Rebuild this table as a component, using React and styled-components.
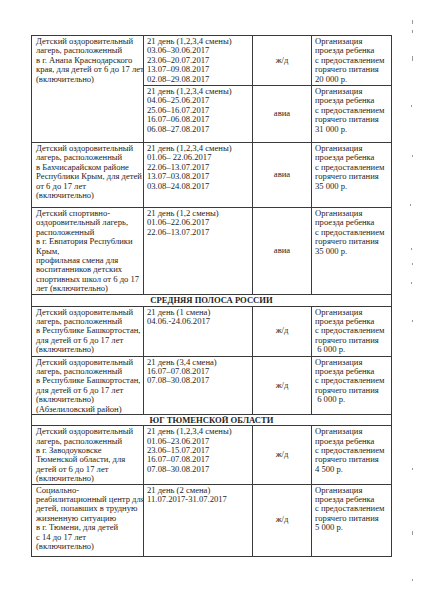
import styled, { createGlobalStyle } from "styled-components";

const GlobalStyle = createGlobalStyle`
  html, body {
    margin: 0;
    padding: 0;
    background: #ffffff;
  }
  body {
    font-family: "Liberation Serif", "Times New Roman", serif;
    color: #1c1c1c;
  }
`;

const camps = [
  {
    name: [
      "Детский оздоровительный",
      "лагерь, расположенный",
      "в г. Анапа Краснодарского",
      "края, для детей от 6 до 17 лет",
      "(включительно)",
    ],
    trips: [
      {
        h: 50,
        dates: [
          "21 день (1,2,3,4 смены)",
          "03.06–30.06.2017",
          "23.06–20.07.2017",
          "13.07–09.08.2017",
          "02.08–29.08.2017",
        ],
        transport: "ж/д",
        price: "20 000 р.",
      },
      {
        h: 57,
        dates: [
          "21 день (1,2,3,4 смены)",
          "04.06–25.06.2017",
          "25.06–16.07.2017",
          "16.07–06.08.2017",
          "06.08–27.08.2017",
        ],
        transport: "авиа",
        price: "31 000 р.",
      },
    ],
  },
  {
    name: [
      "Детский оздоровительный",
      "лагерь, расположенный",
      "в Бахчисарайском районе",
      "Республики Крым, для детей",
      "от 6 до 17 лет",
      "(включительно)",
    ],
    trips: [
      {
        h: 65,
        dates: [
          "21 день (1,2,3,4 смены)",
          "01.06– 22.06.2017",
          "22.06–13.07.2017",
          "13.07–03.08.2017",
          "03.08–24.08.2017",
        ],
        transport: "авиа",
        price: "35 000 р.",
      },
    ],
  },
  {
    name: [
      "Детский спортивно-",
      "оздоровительный лагерь,",
      "расположенный",
      "в г. Евпатория Республики",
      "Крым,",
      "профильная смена для",
      "воспитанников детских",
      "спортивных школ от 6 до 17",
      "лет (включительно)",
    ],
    trips: [
      {
        h: 86,
        dates: ["21 день (1,2 смены)", "01.06–22.06.2017", "22.06–13.07.2017"],
        transport: "авиа",
        price: "35 000 р.",
      },
    ],
  },
  { section: "СРЕДНЯЯ ПОЛОСА РОССИИ", h: 12 },
  {
    name: [
      "Детский оздоровительный",
      "лагерь, расположенный",
      "в Республике Башкортостан,",
      "для детей от 6 до 17 лет",
      "(включительно)",
    ],
    trips: [
      {
        h: 50,
        dates: ["21 день (1 смена)", "04.06.-24.06.2017"],
        transport: "ж/д",
        price: "\u00a06 000 р.",
      },
    ],
  },
  {
    name: [
      "Детский оздоровительный",
      "лагерь, расположенный",
      "в Республике Башкортостан,",
      "для детей от 6 до 17 лет",
      "(включительно)",
      "(Абзелиловский район)",
    ],
    trips: [
      {
        h: 58,
        dates: ["21 день (3,4 смена)", "16.07–07.08.2017", "07.08–30.08.2017"],
        transport: "ж/д",
        price: "\u00a06 000 р.",
      },
    ],
  },
  { section: "ЮГ ТЮМЕНСКОЙ ОБЛАСТИ", h: 11 },
  {
    name: [
      "Детский оздоровительный",
      "лагерь, расположенный",
      "в г. Заводоуковске",
      "Тюменской области, для",
      "детей от 6 до 17 лет",
      "(включительно)",
    ],
    trips: [
      {
        h: 57,
        dates: [
          "21 день (1,2,3,4 смены)",
          "01.06–23.06.2017",
          "23.06–15.07.2017",
          "16.07–07.08.2017",
          "07.08–30.08.2017",
        ],
        transport: "ж/д",
        price: "4 500 р.",
      },
    ],
  },
  {
    name: [
      "Социально-",
      "реабилитационный центр для",
      "детей, попавших в трудную",
      "жизненную ситуацию",
      "в г. Тюмени, для детей",
      "с 14 до 17 лет",
      "(включительно)",
    ],
    trips: [
      {
        h: 72,
        dates: ["21 день (2 смена)", "11.07.2017-31.07.2017"],
        transport: "ж/д",
        price: "5 000 р.",
      },
    ],
  },
];

const priceLines = (price) => [
  "Организация",
  "проезда ребенка",
  "с предоставлением",
  "горячего питания",
  price,
];

const specks = [
  [412, 20, 4],
  [412, 30, 3],
  [412, 56, 5],
  [411, 105, 2],
  [412, 155, 2],
  [410, 204, 2],
  [411, 248, 2],
  [412, 263, 2],
  [411, 282, 2],
  [412, 320, 2],
  [412, 468, 2],
  [412, 531, 4],
  [412, 579, 2],
];

function Lines({ lines }) {
  return lines.map((line, i) => <Line key={i}>{line}</Line>);
}

export default function App() {
  return (
    <Page>
      <GlobalStyle />
      <Sheet>
        <colgroup>
          <col style={{ width: 112 }} />
          <col style={{ width: 109 }} />
          <col style={{ width: 59 }} />
          <col style={{ width: 80 }} />
        </colgroup>
        <tbody>
          {camps.map((camp, ci) =>
            camp.section ? (
              <Row key={ci} $h={camp.h}>
                <SectionCell colSpan={4}>{camp.section}</SectionCell>
              </Row>
            ) : (
              camp.trips.map((trip, ti) => (
                <Row key={`${ci}-${ti}`} $h={trip.h}>
                  {ti === 0 && (
                    <TextCell rowSpan={camp.trips.length}>
                      <Lines lines={camp.name} />
                    </TextCell>
                  )}
                  <TextCell $pad={3}>
                    <Lines lines={trip.dates} />
                  </TextCell>
                  <TransportCell>{trip.transport}</TransportCell>
                  <TextCell $pad={3}>
                    <Lines lines={priceLines(trip.price)} />
                  </TextCell>
                </Row>
              ))
            )
          )}
        </tbody>
      </Sheet>
      {specks.map(([x, y, h], i) => (
        <Speck key={i} style={{ left: x, top: y, height: h }} />
      ))}
    </Page>
  );
}

const Page = styled.div`
  position: relative;
  width: 423px;
  height: 598px;
  padding: 35px 0 0 31px;
  box-sizing: border-box;
  overflow: hidden;
`;

const Sheet = styled.table`
  width: 361px;
  table-layout: fixed;
  border-collapse: collapse;
  font-family: "Liberation Serif", "Times New Roman", serif;
  font-size: 8.6px;
  line-height: 9.4px;
  color: #1e1e1e;
`;

const Row = styled.tr`
  height: ${(p) => p.$h}px;
`;

const TextCell = styled.td`
  border: 1px solid #3a3a3a;
  vertical-align: top;
  padding: 1px 2px 0 ${(p) => p.$pad || 4}px;
  white-space: nowrap;
  overflow: hidden;
`;

const TransportCell = styled.td`
  border: 1px solid #3a3a3a;
  text-align: center;
  vertical-align: middle;
  padding: 0 2px;
`;

const SectionCell = styled.td`
  border: 1px solid #3a3a3a;
  text-align: center;
  vertical-align: middle;
  font-weight: bold;
  font-size: 8.6px;
  line-height: 9px;
  padding: 0;
`;

const Line = styled.div`
  display: block;
`;

const Speck = styled.span`
  position: absolute;
  width: 1px;
  background: #9a9a9a;
`;
